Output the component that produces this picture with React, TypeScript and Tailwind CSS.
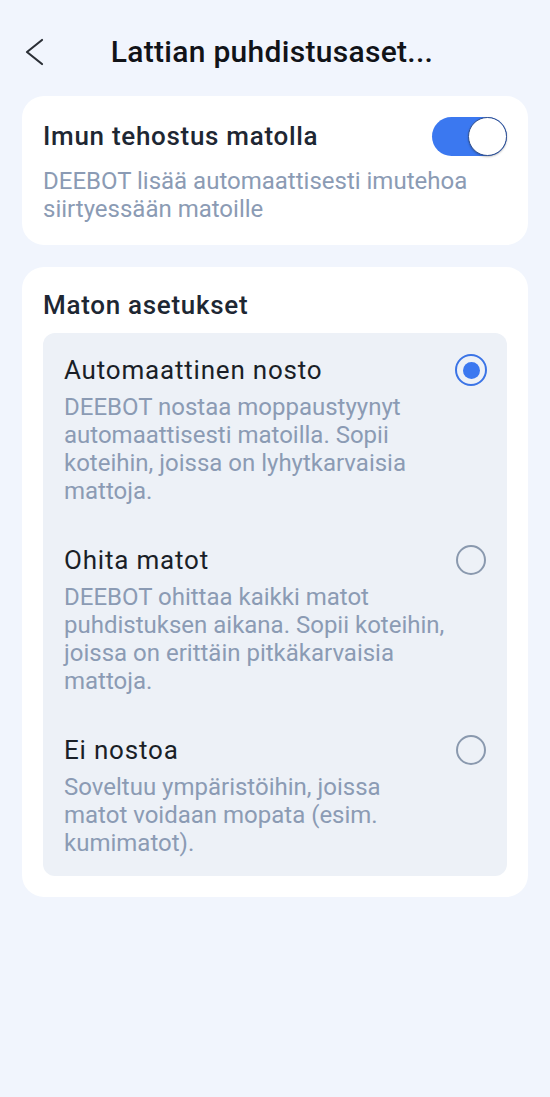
import React, { useState } from 'react';

const font = { fontFamily: 'Roboto, "Noto Sans", sans-serif' };

interface Option {
  id: string;
  title: string;
  lines: string[];
}

const options: Option[] = [
  {
    id: 'auto',
    title: 'Automaattinen nosto',
    lines: ['DEEBOT nostaa moppaustyynyt', 'automaattisesti matoilla. Sopii', 'koteihin, joissa on lyhytkarvaisia', 'mattoja.'],
  },
  {
    id: 'skip',
    title: 'Ohita matot',
    lines: ['DEEBOT ohittaa kaikki matot', 'puhdistuksen aikana. Sopii koteihin,', 'joissa on erittäin pitkäkarvaisia', 'mattoja.'],
  },
  {
    id: 'none',
    title: 'Ei nostoa',
    lines: ['Soveltuu ympäristöihin, joissa', 'matot voidaan mopata (esim.', 'kumimatot).'],
  },
];

const Radio: React.FC<{ checked: boolean }> = ({ checked }) =>
  checked ? (
    <div className="w-[32px] h-[32px] rounded-full border-2 border-[#3b74e6] flex items-center justify-center shrink-0">
      <div className="w-[17px] h-[17px] rounded-full bg-[#3b78f0]" />
    </div>
  ) : (
    <div className="w-[30px] h-[30px] m-px rounded-full border-2 border-[#8a99ae] shrink-0" />
  );

export default function App() {
  const [boost, setBoost] = useState(true);
  const [selected, setSelected] = useState('auto');

  return (
    <div className="min-h-[1097px] bg-[#f1f5fd] pt-4" style={font}>
      {/* header */}
      <div className="h-[72px] flex items-center relative">
        <button className="ml-[23px] w-[22px] h-[28px] flex items-center justify-center">
          <svg width="20" height="28" viewBox="0 0 20 28" fill="none">
            <path d="M18 2 L3 14 L18 26" stroke="#2b2f36" strokeWidth="2.2" strokeLinecap="round" strokeLinejoin="round" />
          </svg>
        </button>
        <h1 className="absolute left-0 right-[6px] text-center text-[30px] tracking-[0.3px] font-medium text-[#111318] pointer-events-none leading-[40px]">
          Lattian puhdistusaset...
        </h1>
      </div>

      {/* suction boost card */}
      <div className="mx-[22px] mt-2 bg-white rounded-[22px] px-[21px] pt-[21px] pb-[22px]">
        <div className="flex items-center justify-between">
          <span className="text-[26px] tracking-[0.7px] font-medium text-[#1e2733] leading-[39px]">Imun tehostus matolla</span>
          <button
            onClick={() => setBoost(!boost)}
            className={`w-[75px] h-[39px] rounded-full flex items-center ${boost ? 'bg-[#3b78f0] justify-end' : 'bg-[#c9d1dd] justify-start'}`}
          >
            <span className="w-[39px] h-[39px] rounded-full bg-white border border-[#2f4f8f] shadow-[0_1px_2px_rgba(0,0,0,0.25)]" />
          </button>
        </div>
        <p className="mt-[11px] text-[24px] leading-[28px] text-[#8b9bb4]">
          DEEBOT lisää automaattisesti imutehoa
          <br />
          siirtyessään matoille
        </p>
      </div>

      {/* carpet settings card */}
      <div className="mx-[22px] mt-[22px] bg-white rounded-[22px] px-[21px] pt-[22px] pb-[21px]">
        <h2 className="text-[26px] tracking-[0.7px] font-medium text-[#1e2733] leading-[32px]">Maton asetukset</h2>
        <div className="mt-[12px] bg-[#edf1f7] rounded-[12px] pl-[21px] pr-[20px] pt-[21px] pb-[19px] flex flex-col gap-[39px]">
          {options.map(o => (
            <div key={o.id} className="cursor-pointer" onClick={() => setSelected(o.id)}>
              <div className="flex items-center justify-between">
                <span className="text-[26px] tracking-[0.8px] leading-[32px] text-[#1a1f27]">{o.title}</span>
                <Radio checked={selected === o.id} />
              </div>
              <p className="mt-[7px] text-[24px] leading-[28px] text-[#8b9bb4]">
                {o.lines.map((l, i) => (
                  <span key={i} className="block">
                    {l}
                  </span>
                ))}
              </p>
            </div>
          ))}
        </div>
      </div>
    </div>
  );
}
